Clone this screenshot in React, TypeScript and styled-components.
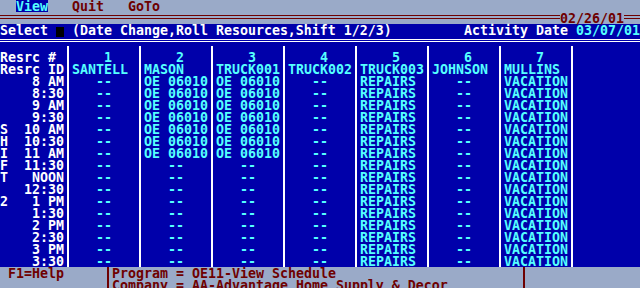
import React from 'react';
import styled, { createGlobalStyle } from 'styled-components';

const colors = {
    blue: '#0000AA',
    cyan: '#55FFFF',
    white: '#FFFFFF',
    grey: '#9AAAC8',
    maroon: '#6E0000',
    black: '#000000',
};

const CHAR = 8;
const ROW = 12;

const GlobalStyle = createGlobalStyle`
    html, body {
        margin: 0;
        padding: 0;
        background: ${colors.grey};
    }
    body {
        font-family: "DejaVu Sans Mono", "Liberation Mono", monospace;
        font-weight: bold;
        font-size: 13.29px;
        line-height: 14px;
    }
`;

interface IColumn {
    num: string;
    name: string;
    cells: string[];
}

const times = [
    '8 AM', '8:30', '9 AM', '9:30', '10 AM', '10:30', '11 AM', '11:30',
    'NOON', '12:30', '1 PM', '1:30', '2 PM', '2:30', '3 PM', '3:30',
];
const shift: { [k: number]: string } = { 4: 'S', 5: 'H', 6: 'I', 7: 'F', 8: 'T', 10: '2' };

const fill = (n: number, a: string, b: string, count: number): string[] =>
    Array.from({ length: count }, (_, i) => (i < n ? a : b));

const DASH = '   --';

const columns: IColumn[] = [
    { num: '1', name: 'SANTELL', cells: fill(0, '', DASH, 16) },
    { num: '2', name: 'MASON', cells: fill(7, 'OE 06010', DASH, 16) },
    { num: '3', name: 'TRUCK001', cells: fill(7, 'OE 06010', DASH, 16) },
    { num: '4', name: 'TRUCK002', cells: fill(0, '', DASH, 16) },
    { num: '5', name: 'TRUCK003', cells: fill(16, 'REPAIRS', DASH, 16) },
    { num: '6', name: 'JOHNSON', cells: fill(0, '', DASH, 16) },
    { num: '7', name: 'MULLINS', cells: fill(16, 'VACATION', DASH, 16) },
];

const App = (): JSX.Element => {
    return (
        <SScreen>
            <GlobalStyle />
            <SMenuBar>
                <SMenuItem active>View</SMenuItem>
                <SMenuItem>Quit</SMenuItem>
                <SMenuItem>GoTo</SMenuItem>
            </SMenuBar>
            <SRuleRow>
                <SRule />
                <SRuleDate>02/26/01</SRuleDate>
                <SRule style={{ flex: 'none', width: 2 * CHAR }} />
            </SRuleRow>
            <SSelectBar>
                <SText color={colors.white}>
                    Select <SCursor /> (Date Change,Roll Resources,Shift 1/2/3)
                </SText>
                <SText color={colors.white}>
                    Activity Date <SText color={colors.cyan}>03/07/01</SText>
                </SText>
            </SSelectBar>
            <STableTop>
                <SDoubleRule />
            </STableTop>
            <STableBody>
                <SColumn width={8}>
                    <SCell color={colors.white}>Resrc #</SCell>
                    <SCell color={colors.white}>Resrc ID</SCell>
                    {times.map((t, i) => (
                        <SCell key={t} color={colors.white}>
                            {(shift[i] || ' ') + t.padStart(7)}
                        </SCell>
                    ))}
                </SColumn>
                {columns.map((col) => (
                    <React.Fragment key={col.num}>
                        <SSeparator />
                        <SColumn width={8}>
                            <SCell color={colors.cyan}>{'    ' + col.num}</SCell>
                            <SCell color={colors.cyan}>{col.name}</SCell>
                            {col.cells.map((c, i) => (
                                <SCell key={i} color={colors.cyan}>{c}</SCell>
                            ))}
                        </SColumn>
                    </React.Fragment>
                ))}
                <SSeparator />
                <SColumn width={8} />
            </STableBody>
            <SFooter>
                <SFooterCell width={13} pad={1}>
                    <SFooterLine>F1=Help</SFooterLine>
                </SFooterCell>
                <SFooterSeparator />
                <SFooterCell width={51}>
                    <SFooterLine>Program = OE11-View Schedule</SFooterLine>
                    <SFooterLine>Company = AA-Advantage Home Supply &amp; Decor</SFooterLine>
                </SFooterCell>
                <SFooterSeparator />
                <SFooterCell width={14} />
            </SFooter>
        </SScreen>
    );
};

const SScreen = styled.div`
    width: 640px;
    height: 288px;
    overflow: hidden;
    background: ${colors.grey};
    white-space: pre;
`;

const SMenuBar = styled.div`
    display: flex;
    height: ${ROW}px;
    padding-left: ${2 * CHAR}px;
    background: ${colors.grey};
`;

const SMenuItem = styled.span<{ active?: boolean }>`
    display: block;
    width: ${4 * CHAR}px;
    height: ${ROW}px;
    margin-right: ${3 * CHAR}px;
    color: ${(p): string => (p.active ? colors.cyan : colors.maroon)};
    background: ${(p): string => (p.active ? colors.blue : 'transparent')};
`;

const SRuleRow = styled.div`
    display: flex;
    height: ${ROW}px;
    background: ${colors.grey};
`;

const SRule = styled.div`
    flex: 1;
    height: 2px;
    margin-top: 3px;
    border-top: 1px solid ${colors.maroon};
    border-bottom: 1px solid ${colors.maroon};
`;

const SRuleDate = styled.span`
    height: ${ROW}px;
    color: ${colors.maroon};
`;

const SSelectBar = styled.div`
    display: flex;
    justify-content: space-between;
    height: ${ROW}px;
    background: ${colors.blue};
`;

const SText = styled.span<{ color: string }>`
    color: ${(p): string => p.color};
`;

const SCursor = styled.span`
    display: inline-block;
    width: ${CHAR}px;
    height: 10px;
    vertical-align: -2px;
    background: ${colors.black};
`;

const STableTop = styled.div`
    height: 6px;
    padding-top: 3px;
    background: ${colors.blue};
`;

const SDoubleRule = styled.div`
    height: 1px;
    border-top: 1px solid ${colors.white};
    border-bottom: 1px solid ${colors.white};
`;

const STableBody = styled.div`
    display: flex;
    height: ${18 * ROW + 6}px;
    background: ${colors.blue};
`;

const SColumn = styled.div<{ width: number }>`
    display: flex;
    flex-direction: column;
    width: ${(p): number => p.width * CHAR}px;
    padding-top: 6px;
`;

const SCell = styled.div<{ color: string }>`
    height: ${ROW}px;
    color: ${(p): string => p.color};
`;

const SSeparator = styled.div`
    width: 2px;
    margin: 1px 3px 0 3px;
    background: ${colors.white};
`;

const SFooter = styled.div`
    display: flex;
    height: ${2 * ROW}px;
    background: ${colors.grey};
    color: ${colors.maroon};
`;

const SFooterCell = styled.div<{ width: number; pad?: number }>`
    width: ${(p): number => p.width * CHAR}px;
    padding-left: ${(p): number => (p.pad || 0) * CHAR}px;
    box-sizing: border-box;
`;

const SFooterLine = styled.div`
    height: ${ROW}px;
`;

const SFooterSeparator = styled.div`
    width: 2px;
    margin: 0 3px;
    background: ${colors.maroon};
`;

export default App;
